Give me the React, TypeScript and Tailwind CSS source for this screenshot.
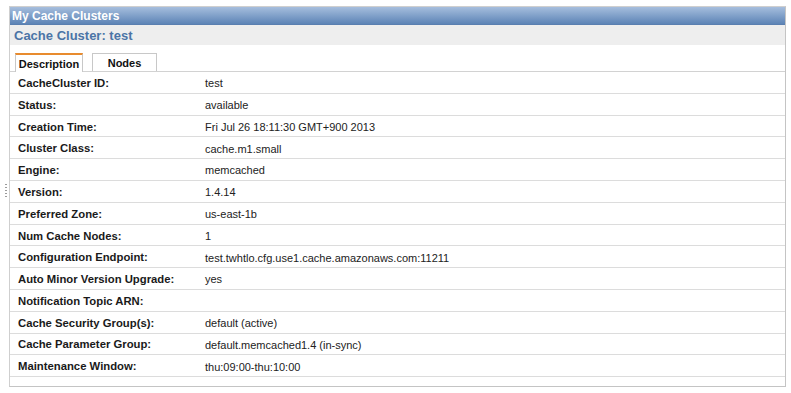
import React from "react";

const rows: [string, string][] = [
  ["CacheCluster ID:", "test"],
  ["Status:", "available"],
  ["Creation Time:", "Fri Jul 26 18:11:30 GMT+900 2013"],
  ["Cluster Class:", "cache.m1.small"],
  ["Engine:", "memcached"],
  ["Version:", "1.4.14"],
  ["Preferred Zone:", "us-east-1b"],
  ["Num Cache Nodes:", "1"],
  ["Configuration Endpoint:", "test.twhtlo.cfg.use1.cache.amazonaws.com:11211"],
  ["Auto Minor Version Upgrade:", "yes"],
  ["Notification Topic ARN:", ""],
  ["Cache Security Group(s):", "default (active)"],
  ["Cache Parameter Group:", "default.memcached1.4 (in-sync)"],
  ["Maintenance Window:", "thu:09:00-thu:10:00"],
];

const App: React.FC = () => {
  return (
    <div
      className="relative w-[791px] h-[393px] bg-white pt-[6px] pl-[9px] overflow-hidden"
      style={{ fontFamily: '"Liberation Sans", Arial, sans-serif' }}
    >
      {/* resize grip */}
      <div className="absolute left-[5px] top-[184px] flex flex-col gap-[2px]">
        {[0, 1, 2, 3, 4].map((i) => (
          <div key={i} className="w-[2px] h-[1px] bg-[#9a9a9a]" />
        ))}
      </div>

      <div className="w-[777px] h-[381px] border border-[#cfcfcf] border-r-[#c4c4c4] border-b-[#c4c4c4] bg-white">
        {/* header bar */}
        <div className="h-[18px] bg-gradient-to-b from-[#a6bedd] to-[#5d84b6] border-b border-[#5a7fb0] flex items-center pl-[2px]">
          <span className="text-white font-bold text-[12px] leading-none">My Cache Clusters</span>
        </div>

        {/* title band */}
        <div className="h-[20px] bg-[#eeeeee] flex items-center pl-[4px]">
          <span className="text-[#4b74a6] font-bold text-[13px] leading-none">Cache Cluster: test</span>
        </div>

        {/* tabs */}
        <div className="pt-[8px] pl-[5px] flex items-end border-b border-[#d2d2d2]">
          <div className="w-[68px] h-[19px] border-t-2 border-t-[#e88b2e] border-x border-x-[#c8c8c8] bg-white -mb-px flex items-center justify-center pt-px">
            <span className="font-bold text-[11px] text-[#111]">Description</span>
          </div>
          <div className="ml-[9px] w-[65px] h-[18px] border border-[#c8c8c8] border-b-0 flex items-center justify-center pt-px">
            <span className="font-bold text-[11px] text-[#111]">Nodes</span>
          </div>
        </div>

        {/* rows */}
        <div>
          {rows.map(([label, value]) => (
            <div
              key={label}
              className="h-[21.8px] border-b border-[#dcdcdc] flex items-center pt-[2px]"
            >
              <div className="w-[195px] pl-[8px] font-bold text-[11.3px] text-[#1a1a1a]">{label}</div>
              <div className="text-[11px] text-[#222]">{value}</div>
            </div>
          ))}
        </div>
      </div>
    </div>
  );
};

export default App;
